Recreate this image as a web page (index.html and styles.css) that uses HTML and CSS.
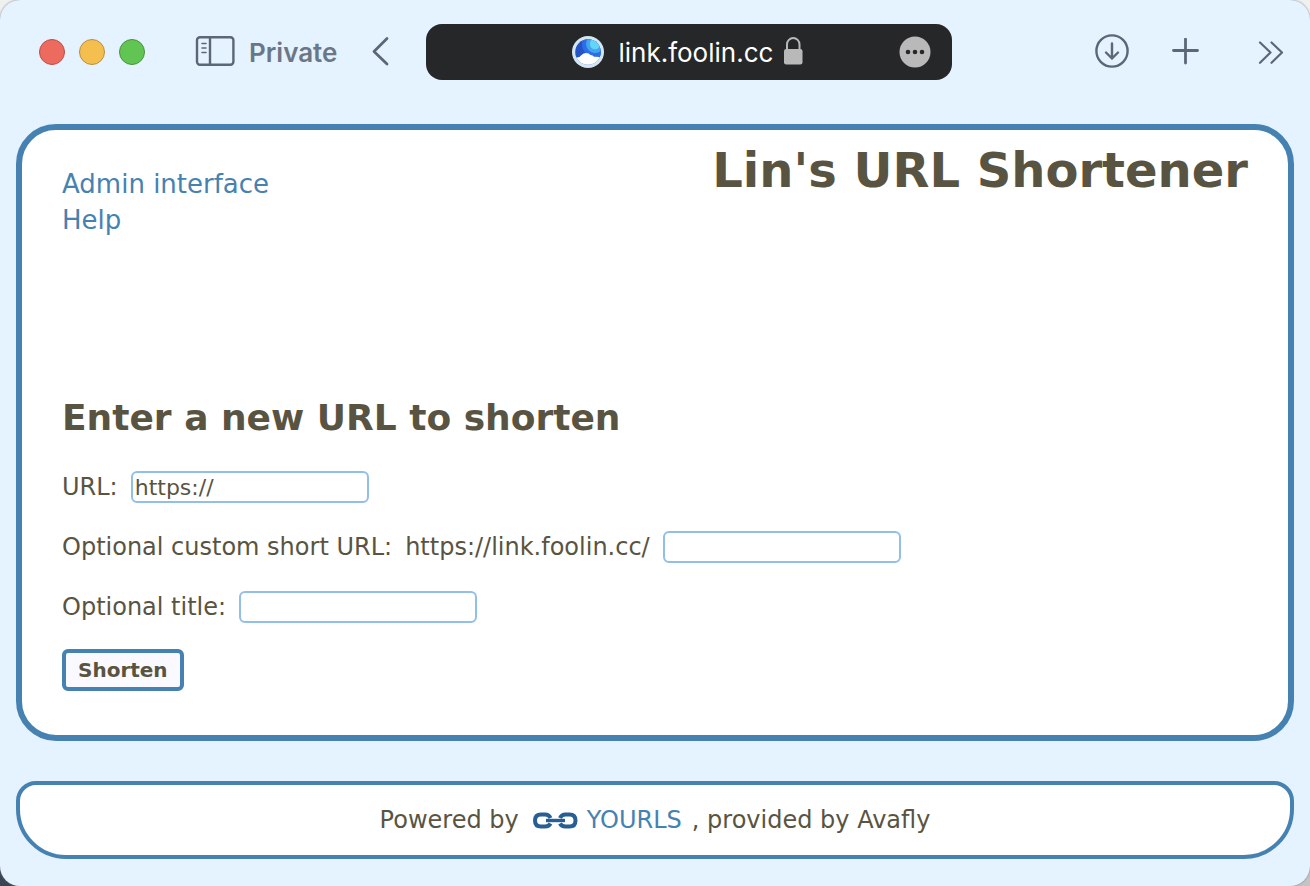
FILE: index.html
```html
<!DOCTYPE html>
<html lang="en">
<head>
<meta charset="utf-8">
<meta name="viewport" content="width=device-width, initial-scale=1">
<title>Lin's URL Shortener</title>
<link rel="stylesheet" href="styles.css">
</head>
<body>
<div class="window">
  <header class="toolbar">
    <div class="lights">
      <button class="light light-close" aria-label="Close"></button>
      <button class="light light-minimize" aria-label="Minimize"></button>
      <button class="light light-zoom" aria-label="Zoom"></button>
    </div>
    <button class="tool sidebar" aria-label="Private, show sidebar">
      <svg width="40" height="32" viewBox="0 0 40 32" fill="none" stroke="currentColor" stroke-width="2.4" stroke-linecap="round"><rect x="2" y="1.200" width="36.400" height="27.600" rx="3"/><path d="M15 1.500v27"/><path d="M7 7.500h4M7 12h4M7 16.500h4" stroke-width="1.6"/></svg>
      <span>Private</span>
    </button>
    <button class="tool back" aria-label="Back">
      <svg width="20" height="32" viewBox="0 0 20 32" fill="none" stroke="currentColor" stroke-width="2.8" stroke-linecap="round" stroke-linejoin="round"><path d="M16 2.500L3 15.500L16 28"/></svg>
    </button>
    <div class="address">
      <svg width="32" height="32" viewBox="0 0 32 32"><defs><clipPath id="disc"><circle cx="16" cy="16" r="12.8"/></clipPath></defs><circle cx="16" cy="16" r="16" fill="#d3e6f2"/><g clip-path="url(#disc)"><path fill="#2453c8" d="M0 0h32v32H0z"/><circle cx="23" cy="8" r="13" fill="#2d6ee6"/><circle cx="23" cy="8" r="9" fill="#43a5f2"/><circle cx="23" cy="8" r="5.200" fill="#63d5fa"/><path fill="#fff" d="M0 32V21.500H5Q7.500 21.500 9.500 19Q11.500 17 14 17Q17 17 18.500 19Q20.500 18.800 22 20.800Q25 20.500 32 21.500V32z"/></g></svg>
      <span>link.foolin.cc</span>
      <svg class="lock" width="20" height="30" viewBox="0 0 20 30"><path d="M4 13V7.500a6.250 6.500 0 0 1 12.500 0V13" fill="none" stroke="#b9b9b9" stroke-width="2"/><rect x="1" y="12" width="18.500" height="15.500" rx="2.200" fill="#b9b9b9"/></svg>
      <button class="more" aria-label="Page settings">
        <svg width="32" height="32" viewBox="0 0 32 32"><circle cx="16" cy="16" r="15.500" fill="#b9b9b9"/><g fill="#262728"><circle cx="9" cy="16" r="2.300"/><circle cx="16" cy="16" r="2.300"/><circle cx="23" cy="16" r="2.300"/></g></svg>
      </button>
    </div>
    <div class="actions">
      <button class="tool" aria-label="Downloads">
        <svg width="36" height="36" viewBox="0 0 36 36" fill="none" stroke="currentColor" stroke-width="2.400" stroke-linecap="round" stroke-linejoin="round"><circle cx="18" cy="17" r="15.600"/><path d="M18 9.500v15M12 18.500L18 24.500L24 18.500"/></svg>
      </button>
      <button class="tool" aria-label="New tab">
        <svg width="28" height="28" viewBox="0 0 28 28" fill="none" stroke="currentColor" stroke-width="2.800" stroke-linecap="round"><path d="M13.500 1v24M1.500 12.500h24"/></svg>
      </button>
      <button class="tool overflow" aria-label="More tools">
        <svg width="26" height="24" viewBox="0 0 26 24" fill="none" stroke="currentColor" stroke-width="2.200" stroke-linecap="round" stroke-linejoin="round"><path d="M2 2.500L12.500 12.500L2 22.800M13.500 2.500L24 12.500L13.500 22.800"/></svg>
      </button>
    </div>
  </header>

  <main class="card">
    <div class="masthead">
      <nav class="links">
        <a href="#admin">Admin interface</a>
        <a href="#help">Help</a>
      </nav>
      <h1 class="title">Lin's URL Shortener</h1>
    </div>
    <h2 class="heading">Enter a new URL to shorten</h2>
    <form class="form">
      <div class="fields">
        <div class="row"><label for="url">URL:</label><input class="field" id="url" type="text" value="https://"></div>
        <div class="row"><label for="keyword">Optional custom short URL:</label><span>https://link.foolin.cc/</span><input class="field" id="keyword" type="text"></div>
        <div class="row"><label for="title">Optional title:</label><input class="field" id="title" type="text"></div>
      </div>
      <button class="submit" type="submit">Shorten</button>
    </form>
  </main>

  <footer class="footer">
    <span>Powered by</span>
    <a class="brand" href="#yourls">
      <svg width="45" height="18" viewBox="0 0 45 18" fill="none" stroke="#275f94" stroke-width="4"><path d="M17.500 7Q16 3.500 12 3.500H8Q2 3.500 2 9.500T8 15.500H12Q16 15.500 17.500 12.500M27 7Q28.500 3.500 32.500 3.500H36.500Q42.500 3.500 42.500 9.500T36.500 15.500H32.500Q28.500 15.500 27 12.500"/><path d="M13 9.500H32" stroke-width="3.400"/></svg>
      <span>YOURLS</span>
    </a>
    <span>, provided by Avafly</span>
  </footer>
</div>
</body>
</html>
```
FILE: styles.css
```css
* {
  box-sizing: border-box;
}

html {
  background: linear-gradient(90deg, #3a4454 50%, #c4c4c4 50%) bottom / 100% 50% no-repeat #f0f0ee;
}

body {
  margin: 0;
  color: #595441;
  font-family: Verdana, "DejaVu Sans", sans-serif;
  font-size: 24px;
}

a {
  color: #4682b1;
  text-decoration: none;
}

button {
  padding: 0;
  border: 0;
  background: none;
  color: inherit;
  font: inherit;
}

svg {
  display: block;
  flex: none;
}

.window {
  display: flex;
  flex-direction: column;
  min-height: 100vh;
  padding: 0 16px 27px;
  border-radius: 20px;
  background: #e5f2ff;
  box-shadow: 0 0 2px #777;
}

.toolbar {
  display: flex;
  align-items: center;
  height: 104px;
  padding: 0 10px 0 23px;
  color: #5c6775;
  font-family: Inter, "Liberation Sans", sans-serif;
}

.lights {
  display: flex;
  gap: 14px;
  margin-right: 50px;
}

.light {
  width: 26px;
  height: 26px;
  border: 1px solid;
  border-radius: 50%;
}

.light-close {
  border-color: #c04c45;
  background: #ed6a5e;
}

.light-minimize {
  border-color: #b98e3d;
  background: #f5bf4f;
}

.light-zoom {
  border-color: #47943b;
  background: #61c554;
}

.tool {
  display: flex;
  align-items: center;
}

.sidebar {
  gap: 14px;
  font-size: 26px;
  font-weight: 600;
}

.sidebar span {
  color: #6b7785;
}

.back {
  margin: 0 35px 0 34px;
}

.address {
  display: flex;
  flex: 0 1 526px;
  align-items: center;
  height: 56px;
  padding: 0 21px 0 146px;
  border-radius: 16px;
  background: #262728;
  color: #fff;
  font-family: Inter, "Liberation Sans", sans-serif;
  font-size: 26px;
}

.address span {
  margin: 0 10px 0 14px;
}

.more {
  margin-left: auto;
}

.actions {
  display: flex;
  align-items: center;
  gap: 42px;
  margin-left: auto;
}

.overflow {
  margin-left: 16px;
}

.card {
  margin-top: 20px;
  padding: 10px 40px 44px;
  border: 6px solid #4682b1;
  border-radius: 40px;
  background: #fff;
}

.masthead {
  display: flex;
  justify-content: space-between;
  min-height: 246px;
}

.links {
  display: flex;
  flex-direction: column;
  padding-top: 26px;
  font-size: 26px;
  line-height: 36px;
}

.title {
  margin: 0;
  font-size: 48px;
  line-height: 60px;
}

.heading {
  margin: 8px 0 29px;
  font-size: 36px;
  line-height: 48px;
}

.form {
  display: flex;
  flex-direction: column;
  align-items: flex-start;
  gap: 26px;
}

.fields {
  display: flex;
  flex-direction: column;
  gap: 28px;
}

.row {
  display: flex;
  align-items: center;
  gap: 13px;
  height: 32px;
}

.field {
  width: 238px;
  height: 32px;
  padding: 0 2px;
  border: 2px solid #92bfe8;
  border-radius: 6px;
  background: #fff;
  color: #595441;
  font-family: inherit;
  font-size: 22px;
}

.submit {
  height: 42px;
  padding: 0 12px;
  border: 4px solid #4682b1;
  border-radius: 6px;
  background: #f9f9ff;
  font-size: 20px;
  font-weight: 700;
}

.footer {
  display: flex;
  align-items: center;
  justify-content: center;
  gap: 10px;
  margin-top: 40px;
  min-height: 78px;
  border: 4px solid #4682b1;
  border-radius: 20px 20px 50px 50px;
  background: #fff;
}

.brand {
  display: flex;
  align-items: center;
  gap: 9px;
  padding-left: 4px;
}
```
